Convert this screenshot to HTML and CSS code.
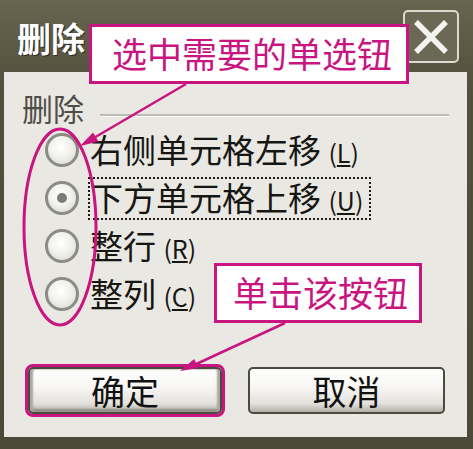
FILE: index.html
```html
<!DOCTYPE html>
<html lang="zh-CN">
<head>
    <meta charset="UTF-8">
    <meta name="viewport" content="width=device-width, initial-scale=1.0">
    <title>删除</title>
    <link rel="stylesheet" href="styles.css">
</head>
<body>
    <div class="page">
        <div class="dialog">
            <div class="titlebar">
                <div class="title">删除</div>
                <div class="close">
                    <svg width="36" height="34" viewBox="0 0 36 34">
                        <path d="M3 2 L33 32 M33 2 L3 32" stroke="#f4f4ee" stroke-width="5.5" fill="none"/>
                    </svg>
                </div>
            </div>

            <div class="client">
                <div class="group-head">
                    <span class="group-label">删除</span>
                    <span class="group-line"></span>
                </div>

                <div class="option">
                    <span class="radio"></span>
                    <span class="option-text">右侧单元格左移 <span class="key">(<u>L</u>)</span></span>
                </div>
                <div class="option">
                    <span class="radio checked"></span>
                    <span class="option-text focused">下方单元格上移 <span class="key">(<u>U</u>)</span></span>
                </div>
                <div class="option">
                    <span class="radio"></span>
                    <span class="option-text">整行 <span class="key">(<u>R</u>)</span></span>
                </div>
                <div class="option">
                    <span class="radio"></span>
                    <span class="option-text">整列 <span class="key">(<u>C</u>)</span></span>
                </div>

                <div class="buttons">
                    <button class="btn btn-ok">确定</button>
                    <button class="btn btn-cancel">取消</button>
                </div>
            </div>
        </div>

        <!-- пометки поверх окна -->
        <svg class="marks" width="473" height="449" viewBox="0 0 473 449">
            <ellipse cx="60" cy="227" rx="36" ry="98" stroke="#c8157f" stroke-width="3" fill="none"/>
            <line x1="186" y1="84" x2="92" y2="139" stroke="#c8157f" stroke-width="2.5"/>
            <polygon points="80,146 98.5,141.5 93,132.5" fill="#c8157f"/>
            <line x1="285" y1="323" x2="192" y2="366" stroke="#c8157f" stroke-width="2.5"/>
            <polygon points="180,371 198.5,368 194.2,359" fill="#c8157f"/>
        </svg>
        <div class="callout callout-top">选中需要的单选钮</div>
        <div class="callout callout-btn">单击该按钮</div>
    </div>
</body>
</html>
```

FILE: styles.css
```css
body {
    margin: 0;
    font-family: "Noto Sans CJK SC", "Liberation Sans", sans-serif;
}

.page {
    position: relative;
    width: 473px;
    height: 449px;
    overflow: hidden;
}

.dialog {
    width: 473px;
    height: 449px;
    background: linear-gradient(#67644f, #524f3c 20%, #4c4938);
    display: flex;
    flex-direction: column;
}

.titlebar {
    height: 72px;
    display: flex;
    justify-content: space-between;
    align-items: flex-start;
    padding: 0 14px 0 17px;
}

.title {
    margin-top: 17px;
    font-size: 34px;
    line-height: 42px;
    font-weight: bold;
    color: #ffffff;
    text-shadow: 1px 1px 0 #2a2820;
}

.close {
    margin-top: 10px;
    width: 56px;
    height: 53px;
    box-sizing: border-box;
    border: 2px solid #dcdad0;
    border-radius: 5px;
    background: #6b6956;
    display: flex;
    align-items: center;
    justify-content: center;
}

.client {
    margin: 0 6px 12px 4px;
    height: 365px;
    box-sizing: border-box;
    padding: 18px 18px 0 18px;
    background: #e9e8e3;
}

.group-head {
    display: flex;
    align-items: center;
    height: 36px;
}

.group-label {
    font-size: 31px;
    line-height: 36px;
    color: #4e4e46;
}

.group-line {
    flex: 1;
    margin: 14px 0 0 16px;
    border-top: 2px solid #bdbcb4;
    border-bottom: 1px solid #fbfbf8;
}

.option {
    display: flex;
    align-items: center;
    height: 48px;
}

.option:first-of-type {
    margin-top: 5px;
}

.radio {
    width: 34px;
    height: 34px;
    box-sizing: border-box;
    margin-left: 23px;
    border-radius: 50%;
    border: 3px solid #8c8c84;
    background: radial-gradient(circle at 45% 40%, #ffffff 0%, #f1f1ee 45%, #d2d2cc 100%);
    display: flex;
    align-items: center;
    justify-content: center;
}

.radio.checked::after {
    content: "";
    width: 10px;
    height: 10px;
    border-radius: 50%;
    background: #7c7c78;
}

.option-text {
    margin-left: 9px;
    padding-right: 6px;
    font-size: 33px;
    line-height: 36px;
    color: #161612;
    border: 2px solid transparent;
}

.option-text.focused {
    border: 2px dotted #1a1a16;
}

.key {
    font-size: 25px;
}

.buttons {
    display: flex;
    margin-top: 49px;
    margin-left: 6px;
    gap: 26px;
}

.btn {
    height: 47px;
    box-sizing: border-box;
    font-family: "Noto Sans CJK SC", sans-serif;
    font-size: 34px;
    line-height: 40px;
    color: #111;
    border: 2px solid #4b4a40;
    border-radius: 5px;
    padding: 0;
    background: linear-gradient(#ffffff 0%, #f6f5f2 45%, #e2e1dc 80%, #b3b0a5 100%);
}

.btn-ok {
    width: 194px;
    outline: 3px solid #c8157f;
    box-shadow: inset 3px 0 2px #a9a79d, inset -3px 0 2px #a9a79d, inset 0 -3px 2px #8f8c80;
}

.btn-cancel {
    width: 197px;
}

.marks {
    position: absolute;
    left: 0;
    top: 0;
}

.callout {
    position: absolute;
    box-sizing: border-box;
    height: 60px;
    border: 3px solid #c8157f;
    background: #ffffff;
    color: #c8157f;
    font-size: 35px;
    line-height: 52px;
}

.callout-top {
    left: 89px;
    top: 24px;
    width: 320px;
    padding-left: 20px;
}

.callout-btn {
    left: 214px;
    top: 263px;
    width: 208px;
    padding-left: 16px;
}
```
